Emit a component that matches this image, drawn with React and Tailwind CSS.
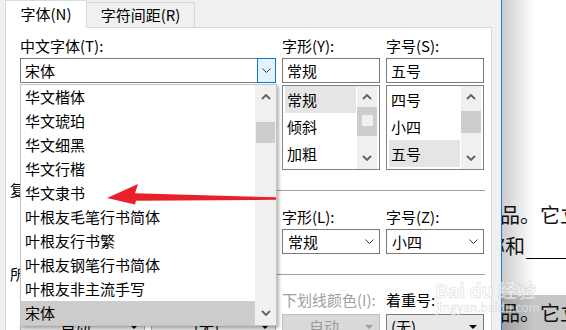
import React from "react";

const ChevThin = () => (
  <svg width="9" height="5" viewBox="0 0 9 5">
    <path d="M0.5 0.5L4.5 4.5L8.5 0.5" fill="none" stroke="#3c3c3c" strokeWidth="1" />
  </svg>
);

const ChevBold = ({ up }) => (
  <svg width="10" height="6" viewBox="0 0 10 6">
    <path
      d={up ? "M1 5L5 1L9 5" : "M1 1L5 5L9 1"}
      fill="none"
      stroke="#606060"
      strokeWidth="1.8"
    />
  </svg>
);

const Tri = ({ color }) => (
  <svg width="8" height="4" viewBox="0 0 8 4">
    <path d="M0 0H8L4 4Z" fill={color} />
  </svg>
);

const Label = ({ children, gray }) => (
  <div
    className={`h-[20px] whitespace-nowrap text-[15px] leading-[20px] ${
      gray ? "text-[#a0a0a0]" : "text-black"
    }`}
  >
    {children}
  </div>
);

const Box = ({ children }) => (
  <div className="h-[25px] border border-[#7a7a7a] bg-white pl-[4px] text-[15px] leading-[23px]">
    {children}
  </div>
);

const Combo = ({ children }) => (
  <div className="flex h-[25px] items-center border border-[#7a7a7a] bg-white pl-[5px] pr-[5px] text-[15px]">
    <span className="flex-1 leading-[23px]">{children}</span>
    <ChevThin />
  </div>
);

function SmallList({ items, sel, thumbTop, thumbH, square }) {
  return (
    <div className="flex h-[85px] border border-[#828282] bg-white px-[2px]">
      <div className="flex w-[72px] flex-col">
        {items.map((t, i) => (
          <div
            key={t}
            className={`h-[27px] pl-[2px] text-[15px] leading-[27px] ${
              i === sel ? "bg-[#e5e5e5]" : ""
            }`}
          >
            {t}
          </div>
        ))}
      </div>
      <div className="ml-[1px] flex w-[20px] flex-col bg-[#f0f0f0]">
        <div className="flex h-[22px] items-center justify-center">
          <ChevBold up />
        </div>
        <div
          className="flex items-start justify-center bg-[#cdcdcd]"
          style={{ marginTop: thumbTop, height: thumbH }}
        >
          {square && <div className="mt-[8px] h-[11px] w-[11px] bg-[#f0f0f0]" />}
        </div>
        <div className="flex-1" />
        <div className="flex h-[22px] items-center justify-center">
          <ChevBold />
        </div>
      </div>
    </div>
  );
}

const fonts = [
  "华文楷体",
  "华文琥珀",
  "华文细黑",
  "华文行楷",
  "华文隶书",
  "叶根友毛笔行书简体",
  "叶根友行书繁",
  "叶根友钢笔行书简体",
  "叶根友非主流手写",
  "宋体",
];

export default function App() {
  return (
    <div className="relative flex h-[330px] w-[566px] overflow-hidden bg-white font-['Noto_Sans_CJK_SC',sans-serif] text-black">
      {/* Dialog */}
      <div className="relative flex h-[330px] w-[502px] flex-col border-r border-[#1e7ad6] bg-[#f0f0f0]">
        {/* Tabs */}
        <div className="flex h-[28px] items-end pl-[5px]">
          <div className="relative z-10 -mb-px flex h-[28px] w-[82px] items-center justify-center border border-b-0 border-[#d9d9d9] bg-white text-[15px]">
            字体(N)
          </div>
          <div className="flex h-[25px] w-[108px] items-center justify-center border-r border-t border-[#d9d9d9] bg-[#f0f0f0] text-[15px]">
            字符间距(R)
          </div>
        </div>

        {/* Panel */}
        <div className="ml-[5px] w-[487px] flex-1 border border-b-0 border-[#d9d9d9] bg-white pl-[4px] pr-[6px] pt-[8px]">
          {/* Section 1 */}
          <div className="ml-[10px] grid grid-cols-[256px_98px_98px] gap-x-[6px]">
            <Label>中文字体(T):</Label>
            <Label>字形(Y):</Label>
            <Label>字号(S):</Label>
          </div>
          <div className="ml-[10px] mt-[2px] grid grid-cols-[256px_98px_98px] gap-x-[6px]">
            <div className="flex h-[25px] border border-r-0 border-[#7a7a7a] bg-white">
              <div className="flex-1 pl-[4px] text-[15px] leading-[23px]">宋体</div>
              <div className="-my-px flex w-[19px] items-center justify-center border border-[#0078d7] bg-[#e5f1fb]">
                <ChevThin />
              </div>
            </div>
            <Box>常规</Box>
            <Box>五号</Box>
          </div>
          <div className="ml-[10px] mt-[2px] grid grid-cols-[256px_98px_98px] gap-x-[6px]">
            <div className="flex flex-col gap-[2px] pt-[10px]">
              <Label>西文字体(F):</Label>
              <Combo>Times New Roman</Combo>
            </div>
            <SmallList items={["常规", "倾斜", "加粗"]} sel={0} thumbTop={-1} thumbH={29} square />
            <SmallList items={["四号", "小四", "五号"]} sel={2} thumbTop={3} thumbH={22} />
          </div>

          {/* Heading: 复杂文种 */}
          <div className="mt-[10px] flex h-[20px] items-center">
            <span className="pr-[4px] text-[15px] leading-[20px]">复杂文种</span>
            <div className="flex-1 border-t border-[#a0a0a0]" />
          </div>

          {/* Section 2 */}
          <div className="ml-[10px] mt-[7px] grid grid-cols-[256px_98px_98px] gap-x-[6px]">
            <Label>字体(F):</Label>
            <Label>字形(L):</Label>
            <Label>字号(Z):</Label>
          </div>
          <div className="ml-[10px] mt-[2px] grid grid-cols-[256px_98px_98px] gap-x-[6px]">
            <Combo>Times New Roman</Combo>
            <Combo>常规</Combo>
            <Combo>小四</Combo>
          </div>

          {/* Heading: 所有文字 */}
          <div className="mt-[10px] flex h-[20px] items-center">
            <span className="pr-[4px] text-[15px] leading-[20px]">所有文字</span>
            <div className="flex-1 border-t border-[#a0a0a0]" />
          </div>

          {/* Section 3 */}
          <div className="ml-[10px] mt-[6px] grid grid-cols-[125px_125px_98px_98px] gap-x-[6px]">
            <Label>字体颜色(C):</Label>
            <Label>下划线线型(U):</Label>
            <Label gray>下划线颜色(I):</Label>
            <Label>着重号:</Label>
          </div>
          <div className="ml-[10px] mt-[4px] grid grid-cols-[125px_125px_98px_98px] gap-x-[6px]">
            <div className="flex h-[25px] items-center border border-[#adadad] bg-[#e1e1e1] pr-[6px] text-[15px]">
              <span className="flex-1 text-center leading-[23px]">自动</span>
              <Tri color="#000" />
            </div>
            <div className="flex h-[25px] items-center border border-[#adadad] bg-[#e1e1e1] pr-[6px] text-[15px]">
              <span className="flex-1 text-center leading-[23px]">(无)</span>
              <Tri color="#000" />
            </div>
            <div className="flex h-[25px] items-center border border-[#bfbfbf] bg-[#d9d9d9] pr-[6px] text-[15px] text-[#9a9a9a]">
              <span className="flex-1 text-center leading-[23px]">自动</span>
              <Tri color="#a0a0a0" />
            </div>
            <div className="flex h-[25px] items-center border border-[#7a7a7a] bg-[#e8e8e8] pl-[4px] pr-[6px] text-[15px]">
              <span className="flex-1 leading-[23px]">(无)</span>
              <Tri color="#000" />
            </div>
          </div>
        </div>

        {/* Drop-down popup */}
        <div className="absolute left-[20px] top-[84px] z-20 flex h-[242px] w-[257px] border border-[#c4c4c4] bg-white shadow-[2px_2px_3px_rgba(0,0,0,0.28)]">
          <div className="flex w-[234px] flex-col">
            {fonts.map((f, i) => (
              <div
                key={f}
                className={`h-[24px] whitespace-nowrap pl-[4px] text-[15px] leading-[24px] ${
                  i === fonts.length - 1 ? "bg-[#cccccc]" : ""
                }`}
              >
                {f}
              </div>
            ))}
          </div>
          <div className="flex w-[21px] flex-col bg-[#f0f0f0]">
            <div className="flex h-[23px] items-center justify-center">
              <ChevBold up />
            </div>
            <div className="mx-[1px] mt-[14px] h-[21px] bg-[#cdcdcd]" />
            <div className="flex-1" />
            <div className="flex h-[24px] items-center justify-center">
              <ChevBold />
            </div>
          </div>
        </div>
      </div>

      {/* Document behind */}
      <div className="relative flex-1 overflow-hidden bg-white text-[20px] text-[#111]">
        <div className="h-[200px]" />
        <div className="-ml-[2px] h-[30px] whitespace-nowrap leading-[30px]">品。它立</div>
        <div className="-ml-[17px] flex h-[32px] whitespace-nowrap">
          <span className="leading-[32px]">称和</span>
          <span className="ml-[1px] h-[29px] w-[60px] shrink-0 border-b border-black" />
        </div>
        <div className="mt-[33px] h-[35px] bg-[#c6c6c6] pt-[3px]">
          <div className="-ml-[2px] h-[30px] whitespace-nowrap leading-[30px]">品。它立</div>
        </div>
        <div className="absolute inset-y-0 left-0 w-[32px] bg-gradient-to-r from-black/20 to-transparent" />
      </div>

      {/* Watermark */}
      <div className="pointer-events-none absolute left-[435px] top-[279px] z-30 whitespace-nowrap text-[19px] font-bold leading-[22px] text-white/60 [-webkit-text-stroke:0.6px_rgba(190,190,190,0.6)]">
        Bai du 经验
      </div>
      <div className="pointer-events-none absolute left-[436px] top-[300px] z-30 whitespace-nowrap text-[12px] leading-[14px] text-white/60 [-webkit-text-stroke:0.4px_rgba(190,190,190,0.6)]">
        jingyan.baidu.com
      </div>

      {/* Red arrow */}
      <svg
        className="pointer-events-none absolute left-0 top-0 z-40"
        width="566"
        height="330"
        viewBox="0 0 566 330"
      >
        <polygon
          points="107,198 138,184 135,193.3 276,197.3 276,199.8 136,200.8 135,204.5"
          fill="#e8202a"
        />
      </svg>
    </div>
  );
}
